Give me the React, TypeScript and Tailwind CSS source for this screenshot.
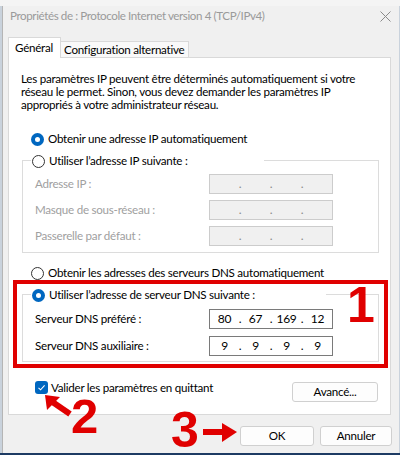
import React from "react";

const font = "font-['Lato','Liberation_Sans',sans-serif] tracking-[-0.25px]";

function Radio({ checked }: { checked?: boolean }) {
  return checked ? (
    <span className="w-[13px] h-[13px] rounded-full bg-[#0067c0] flex items-center justify-center shrink-0">
      <span className="w-[5px] h-[5px] rounded-full bg-white" />
    </span>
  ) : (
    <span className="w-[13px] h-[13px] rounded-full border border-[#333] bg-white shrink-0" />
  );
}

function IpBox({ parts, disabled }: { parts: string[]; disabled?: boolean }) {
  return (
    <div
      className={`w-[124px] h-[20px] border flex items-center pl-[1px] text-[12px] ${
        disabled ? "bg-[#f0f0f0] border-[#cccccc] text-[#8a8a8a]" : "bg-white border-[#7a7a7a] text-black"
      }`}
    >
      {parts.map((p, i) => (
        <React.Fragment key={i}>
          {i > 0 && <span className="w-[4px] text-center">.</span>}
          <span className="w-[27px] text-center">{p}</span>
        </React.Fragment>
      ))}
    </div>
  );
}

function FieldRow({ label, parts, disabled }: { label: string; parts: string[]; disabled?: boolean }) {
  return (
    <div className="flex items-center h-[20px]">
      <span className={`w-[174px] ${disabled ? "text-[#a0a0a0]" : "text-black"}`}>{label}</span>
      <IpBox parts={parts} disabled={disabled} />
    </div>
  );
}

function Button({ label, className }: { label: string; className: string }) {
  return (
    <div
      className={`h-[20px] bg-[#fdfdfd] border border-[#d0d0d0] rounded-[3px] flex items-center justify-center text-black ${className}`}
    >
      {label}
    </div>
  );
}

export default function App() {
  const empty = ["", "", "", ""];
  return (
    <div className={`relative w-[400px] h-[455px] overflow-hidden bg-[#c9d2dc] text-[11.6px] ${font}`}>
      <div className="h-[6px] bg-[#f4f4f4]" />
      <div className="ml-[2px] w-[397px] h-[447px] bg-[#f0f0f0] border-l border-[#b5b5b5] flex flex-col">
        {/* title bar */}
        <div className="h-[19px] flex items-center justify-between pl-[7px] pr-[8px] text-[#9a9a9a]">
          <span className="whitespace-nowrap tracking-[-0.4px]">Propriétés de : Protocole Internet version 4 (TCP/IPv4)</span>
          <svg width="11" height="11" viewBox="0 0 11 11" className="mt-[1px]">
            <path d="M0.5 0.5 L10.5 10.5 M10.5 0.5 L0.5 10.5" stroke="#8a8a8a" strokeWidth="1" />
          </svg>
        </div>

        {/* tabs */}
        <div className="flex items-end pl-[5px] mt-[12px]">
          <div className="relative z-10 -mb-px h-[21px] bg-white border border-b-0 border-[#d9d9d9] pl-[6px] pr-[7px] flex items-center">
            Général
          </div>
          <div className="h-[16px] bg-[#f9f9f9] border border-l-0 border-b-0 border-[#d9d9d9] pl-[3px] pr-[4px] flex items-center">
            Configuration alternative
          </div>
        </div>

        {/* panel */}
        <div className="ml-[5px] mr-[8px] h-[358px] bg-white border border-[#d9d9d9] px-[12px] pt-[14px] text-black flex flex-col">
          <p className="leading-[13px] whitespace-nowrap">
            Les paramètres IP peuvent être déterminés automatiquement si votre
            <br />
            réseau le permet. Sinon, vous devez demander les paramètres IP
            <br />
            appropriés à votre administrateur réseau.
          </p>

          <div className="mt-[20px] ml-[10px] h-[16px] flex items-center gap-[4px]">
            <Radio checked />
            <span>Obtenir une adresse IP automatiquement</span>
          </div>

          <div className="mt-[13px] ml-[1px] w-[357px] border border-[#dcdcdc] pl-[12px] pb-[6px]">
            <div className="-mt-[8px] -ml-[4px] w-[233px] h-[16px] bg-white flex items-center gap-[4px] pl-[1px]">
              <Radio />
              <span>Utiliser l’adresse IP suivante :</span>
            </div>
            <div className="mt-[5px] flex flex-col gap-[6px]">
              <FieldRow label="Adresse IP :" parts={empty} disabled />
              <FieldRow label="Masque de sous-réseau :" parts={empty} disabled />
              <FieldRow label="Passerelle par défaut :" parts={empty} disabled />
            </div>
          </div>

          <div className="mt-[12px] ml-[10px] h-[16px] flex items-center gap-[4px]">
            <Radio />
            <span>Obtenir les adresses des serveurs DNS automatiquement</span>
          </div>

          {/* highlighted DNS block */}
          <div className="-mt-px -ml-[8px] w-[375px] border-[4px] border-[#e00000] pt-[10px] pb-[2px]">
            <div className="ml-[5px] w-[357px] border border-[#dcdcdc] pl-[12px] pb-[5px]">
              <div className="-mt-[8px] -ml-[4px] w-[295px] h-[16px] bg-white flex items-center gap-[4px] pl-[1px]">
                <Radio checked />
                <span>Utiliser l’adresse de serveur DNS suivante :</span>
              </div>
              <div className="mt-[6px] flex flex-col gap-[7px]">
                <FieldRow label="Serveur DNS préféré :" parts={["80", "67", "169", "12"]} />
                <FieldRow label="Serveur DNS auxiliaire :" parts={["9", "9", "9", "9"]} />
              </div>
            </div>
          </div>

          <div className="mt-[13px] flex items-start justify-between">
            <div className="ml-[14px] flex items-center gap-[3px] h-[13px]">
              <span className="w-[13px] h-[13px] rounded-[3px] bg-[#0067c0] flex items-center justify-center">
                <svg width="9" height="9" viewBox="0 0 9 9">
                  <path d="M1.5 4.8 L3.6 6.8 L7.6 2.4" fill="none" stroke="white" strokeWidth="1.1" />
                </svg>
              </span>
              <span>Valider les paramètres en quittant</span>
            </div>
            <Button label="Avancé..." className="w-[86px] mt-[1px]" />
          </div>
        </div>

        {/* footer */}
        <div className="flex justify-end gap-[6px] pr-[7px] mt-[11px]">
          <Button label="OK" className="w-[74px]" />
          <Button label="Annuler" className="w-[72px]" />
        </div>
      </div>
      <div className="h-[2px] bg-[#1d3b63]" />

      {/* annotations */}
      <span className="absolute left-[347px] top-[283px] text-[50px] leading-[44px] tracking-normal font-bold text-[#e00000] font-['Liberation_Sans',sans-serif]">
        1
      </span>
      <span className="absolute left-[71px] top-[394px] text-[49px] leading-[44px] tracking-normal font-bold text-[#e00000] font-['Liberation_Sans',sans-serif]">
        2
      </span>
      <span className="absolute left-[171px] top-[408px] text-[50px] leading-[44px] tracking-normal font-bold text-[#e00000] font-['Liberation_Sans',sans-serif]">
        3
      </span>
      <svg className="absolute left-[44px] top-[394px]" width="28" height="23" viewBox="0 0 28 23">
        <polygon points="1,1 3,16 16,3" fill="#e00000" />
        <line x1="7" y1="7" x2="26" y2="20" stroke="#e00000" strokeWidth="6" />
      </svg>
      <svg className="absolute left-[203px] top-[422px]" width="35" height="21" viewBox="0 0 35 21">
        <rect x="0" y="7" width="22" height="6" fill="#e00000" />
        <polygon points="19,1 34,10 19,20" fill="#e00000" />
      </svg>
    </div>
  );
}
